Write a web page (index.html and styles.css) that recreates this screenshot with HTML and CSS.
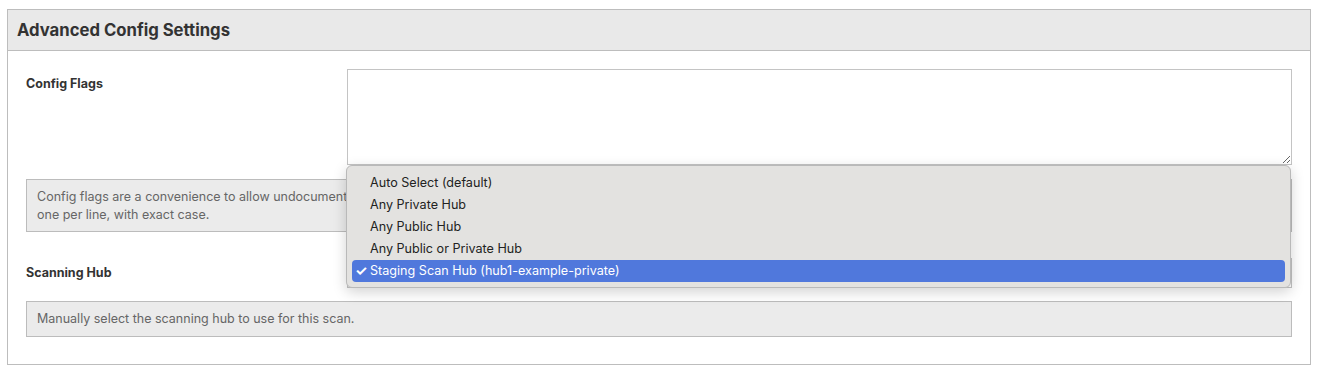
FILE: index.html
```html
<!DOCTYPE html>
<html lang="en">
<head>
    <meta charset="UTF-8">
    <meta name="viewport" content="width=device-width, initial-scale=1.0">
    <title>Advanced Config Settings</title>
    <link rel="stylesheet" href="styles.css">
</head>
<body>
    <div class="panel">
        <div class="panel-heading">Advanced Config Settings</div>

        <div class="panel-body">
            <div class="form-row">
                <label class="form-label" for="config-flags">Config Flags</label>
                <textarea id="config-flags" class="form-input textarea"></textarea>
            </div>
            <div class="help-block">
                Config flags are a convenience to allow undocumented options to be set for a scan. Enter them here,<br>
                one per line, with exact case.
            </div>

            <div class="form-row hub-row">
                <label class="form-label" for="scanning-hub">Scanning Hub</label>
                <div class="select-wrap">
                    <div id="scanning-hub" class="form-input fake-select"></div>

                    <!-- open dropdown menu -->
                    <ul class="dropdown">
                        <li>Auto Select (default)</li>
                        <li>Any Private Hub</li>
                        <li>Any Public Hub</li>
                        <li>Any Public or Private Hub</li>
                        <li class="selected"><span class="check">✓</span>Staging Scan Hub (hub1-example-private)</li>
                    </ul>
                </div>
            </div>
            <div class="help-block single">
                Manually select the scanning hub to use for this scan.
            </div>
        </div>
    </div>
</body>
</html>
```

FILE: styles.css
```css
body {
    margin: 0;
    padding: 9px 7px;
    font-family: Inter, "Noto Sans", sans-serif;
    font-size: 13px;
    color: #333;
    background: #fff;
}

.panel {
    border: 1px solid #bdbdbd;
}

.panel-heading {
    height: 40px;
    line-height: 40px;
    padding: 0 9px;
    background-color: #e9e9e9;
    border-bottom: 1px solid #bdbdbd;
    font-size: 16.7px;
    font-weight: 700;
    color: #333;
}

.panel-body {
    padding: 18px 18px 27px;
}

.form-row {
    display: flex;
}

.form-label {
    width: 321px;
    flex-shrink: 0;
    padding-top: 7px;
    line-height: 16px;
    font-weight: 700;
    font-size: 12.5px;
    color: #333;
}

.form-input {
    flex: 1;
    border: 1px solid #c4c4c4;
    background: #fff;
    box-sizing: border-box;
    font-family: inherit;
    font-size: 13px;
}

.textarea {
    height: 96px;
    margin: 0;
    resize: vertical;
}

.help-block {
    margin-top: 14px;
    padding: 8px 10px 7px;
    line-height: 18px;
    background-color: #ebebeb;
    border: 1px solid #bcbcbc;
    color: #666;
    font-size: 12.5px;
}

.help-block.single {
    margin-top: 13px;
    padding: 8px 10px 8px;
}

.hub-row {
    margin-top: 26px;
}

.select-wrap {
    flex: 1;
    position: relative;
}

.fake-select {
    height: 30px;
}

.dropdown {
    position: absolute;
    top: -93px;
    left: -1px;
    right: 1px;
    margin: 0;
    padding: 6px 5px 5px;
    list-style: none;
    background-color: #e3e2e0;
    border: 1px solid #b9b9b9;
    border-radius: 6px;
    box-shadow: 0 4px 14px rgba(0, 0, 0, 0.18);
    color: #222;
    font-size: 12.6px;
}

.dropdown li {
    position: relative;
    height: 22px;
    line-height: 22px;
    padding-left: 18px;
    border-radius: 4px;
}

.dropdown li.selected {
    background-color: #5078dc;
    color: #fff;
}

.check {
    position: absolute;
    left: 3px;
    top: 0;
    font-size: 14px;
    font-weight: 700;
}
```
